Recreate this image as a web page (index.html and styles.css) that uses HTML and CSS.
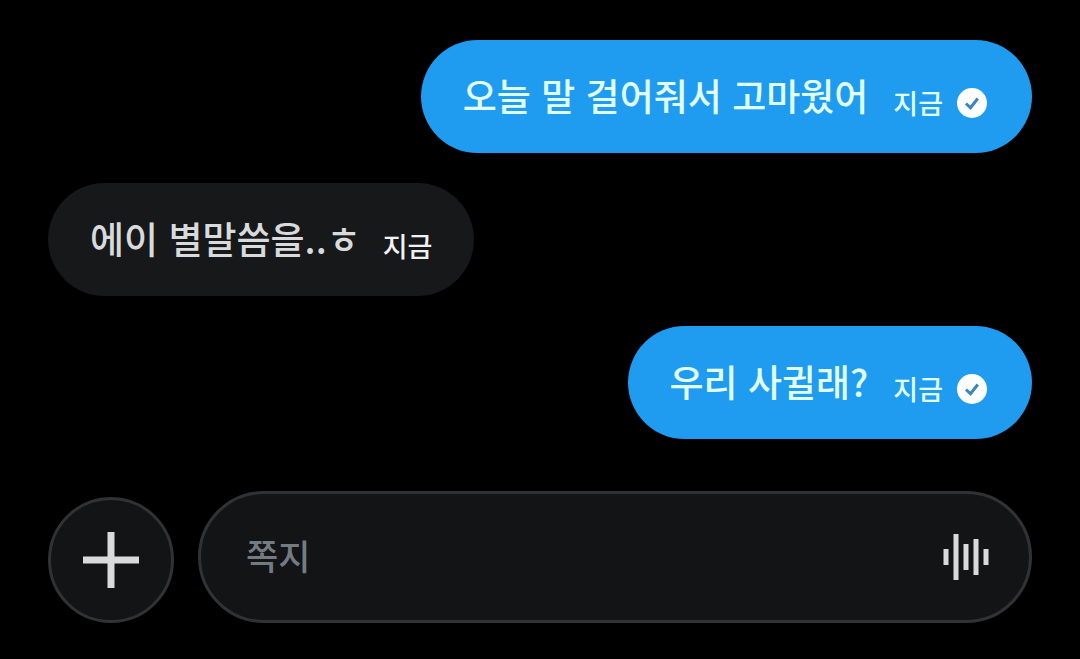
FILE: index.html
```
<!DOCTYPE html>
<html lang="ko">
<head>
    <meta charset="UTF-8">
    <meta name="viewport" content="width=device-width, initial-scale=1.0">
    <title>쪽지</title>
    <link rel="stylesheet" href="styles.css">
</head>
<body>

    <main class="messages">
        <div class="message sent">
            <p class="text">오늘 말 걸어줘서 고마웠어</p>
            <div class="meta">
                <span>지금</span>
                <svg class="check" viewBox="0 0 30 30" role="img" aria-label="전송됨">
                    <circle cx="15" cy="15" r="15" fill="#fff"/>
                    <path d="M9 15.5l4.5 4.3 7.3-9.3" fill="none" stroke="#3a86bd" stroke-width="3"/>
                </svg>
            </div>
        </div>

        <div class="message received">
            <p class="text">에이 별말씀을..ㅎ</p>
            <div class="meta">
                <span>지금</span>
            </div>
        </div>

        <div class="message sent">
            <p class="text">우리 사귈래?</p>
            <div class="meta">
                <span>지금</span>
                <svg class="check" viewBox="0 0 30 30" role="img" aria-label="전송됨">
                    <circle cx="15" cy="15" r="15" fill="#fff"/>
                    <path d="M9 15.5l4.5 4.3 7.3-9.3" fill="none" stroke="#3a86bd" stroke-width="3"/>
                </svg>
            </div>
        </div>
    </main>

    <form class="composer">
        <button type="button" class="add" aria-label="추가">
            <svg width="56" height="56" viewBox="0 0 56 56" fill="#d9dadc">
                <path d="M24.5 0h7v24.5H56v7H31.5V56h-7V31.5H0v-7h24.5z"/>
            </svg>
        </button>
        <div class="field">
            <input type="text" placeholder="쪽지" aria-label="쪽지">
            <button type="button" class="voice" aria-label="음성 메시지">
                <svg width="46" height="46" viewBox="0 0 46 46" fill="#d9dadc">
                    <rect x="0.5" y="15" width="5" height="16"/>
                    <rect x="10.5" y="0" width="5" height="46"/>
                    <rect x="20.5" y="10" width="5" height="26"/>
                    <rect x="30.5" y="5" width="5" height="36"/>
                    <rect x="40.5" y="15" width="5" height="16"/>
                </svg>
            </button>
        </div>
    </form>

</body>
</html>
```

FILE: styles.css
```
* {
    box-sizing: border-box;
}
body {
    margin: 0;
    padding: 40px 48px 36px;
    font-family: "Noto Sans CJK KR", sans-serif;
    font-weight: 500;
    background-color: #000;
    color: #d9dadc;
}
.messages {
    display: flex;
    flex-direction: column;
    gap: 30px;
}
.message {
    display: flex;
    align-items: flex-end;
    gap: 25px;
    padding: 28px 42px 30px;
    border-radius: 57px;
}
.sent {
    align-self: flex-end;
    padding-right: 45px;
    background-color: #1f9bf0;
    color: #e0ffff;
}
.received {
    align-self: flex-start;
    gap: 22px;
    background-color: #16181a;
}
.text {
    margin: 0;
    font-size: 37px;
    line-height: 55px;
}
.meta {
    display: flex;
    align-items: center;
    gap: 14px;
    font-size: 27px;
    line-height: 40px;
}
.received .meta {
    color: #f0f1f2;
}
.check {
    width: 30px;
    height: 30px;
}
.composer {
    display: flex;
    align-items: flex-end;
    gap: 24px;
    margin-top: 52px;
}
button {
    display: flex;
    align-items: center;
    justify-content: center;
    padding: 0;
    border: none;
    background: none;
    cursor: pointer;
}
.add {
    flex: none;
    width: 126px;
    height: 126px;
    border: 3px solid #303234;
    border-radius: 50%;
    background-color: #121416;
}
.field {
    flex: 1;
    display: flex;
    align-items: center;
    height: 132px;
    padding: 0 40px 0 45px;
    border: 3px solid #303234;
    border-radius: 66px;
    background-color: #121416;
}
.field input {
    flex: 1;
    min-width: 0;
    padding: 0 0 6px;
    border: none;
    outline: none;
    background: none;
    color: #d9dadc;
    font: inherit;
    font-size: 35px;
}
.field input::placeholder {
    color: #747b82;
    opacity: 1;
}
```
